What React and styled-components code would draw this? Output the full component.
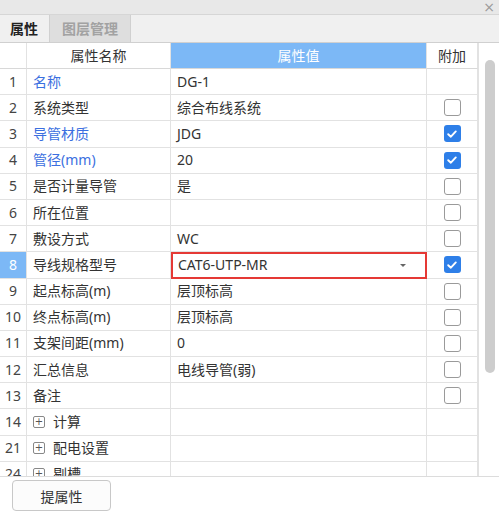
import styled, { createGlobalStyle } from 'styled-components';

const GlobalStyle = createGlobalStyle`
  html, body { margin:0; padding:0; background:#fff; }
  body { font-family:"Noto Sans","Noto Sans CJK SC",sans-serif; }
`;

const rows = [
  { no:'1', name:'名称', value:'DG-1', blue:true },
  { no:'2', name:'系统类型', value:'综合布线系统', check:false },
  { no:'3', name:'导管材质', value:'JDG', blue:true, check:true },
  { no:'4', name:'管径(mm)', value:'20', blue:true, check:true },
  { no:'5', name:'是否计量导管', value:'是', check:false },
  { no:'6', name:'所在位置', value:'', check:false },
  { no:'7', name:'敷设方式', value:'WC', check:false },
  { no:'8', name:'导线规格型号', value:'CAT6-UTP-MR', check:true, active:true },
  { no:'9', name:'起点标高(m)', value:'层顶标高', check:false },
  { no:'10', name:'终点标高(m)', value:'层顶标高', check:false },
  { no:'11', name:'支架间距(mm)', value:'0', check:false },
  { no:'12', name:'汇总信息', value:'电线导管(弱)', check:false },
  { no:'13', name:'备注', value:'', check:false },
  { no:'14', name:'计算', group:true },
  { no:'21', name:'配电设置', group:true },
  { no:'24', name:'剔槽', group:true },
];

const App = () => {
  return (
    <Panel>
      <GlobalStyle />
      <TitleBar>
        <Close>×</Close>
      </TitleBar>
      <TabBar>
        <Tab active>属性</Tab>
        <Tab>图层管理</Tab>
      </TabBar>
      <Body>
        <TableArea>
          <Grid>
            <Head />
            <Head>属性名称</Head>
            <Head value>属性值</Head>
            <Head>附加</Head>
            {rows.map((r) => (
              <Row key={r.no}>
                <IndexCell active={r.active}>{r.no}</IndexCell>
                <NameCell blue={r.blue}>
                  {r.group && <PlusBox>+</PlusBox>}
                  {r.name}
                </NameCell>
                <ValueCell active={r.active}>
                  {r.value}
                  {r.active && <Caret />}
                </ValueCell>
                <CheckCell>
                  {r.check !== undefined && (
                    <Box checked={r.check}>
                      {r.check && (
                        <svg width="12" height="12" viewBox="0 0 12 12">
                          <path d="M2.2 6.2 L4.9 8.7 L9.8 3.4" fill="none" stroke="#fff" strokeWidth="1.9" strokeLinecap="round" strokeLinejoin="round" />
                        </svg>
                      )}
                    </Box>
                  )}
                </CheckCell>
              </Row>
            ))}
          </Grid>
        </TableArea>
        <ScrollTrack>
          <Thumb />
        </ScrollTrack>
      </Body>
      <Footer>
        <Button>提属性</Button>
      </Footer>
    </Panel>
  );
};

const Panel = styled.div`
  width:499px;
  height:511px;
  display:flex;
  flex-direction:column;
  background:#fff;
  color:#333;
  font-size:14px;
  overflow:hidden;
`;

const TitleBar = styled.div`
  height:14px;
  background:#e8e8e8;
  border-bottom:1px solid #d6d6d6;
  display:flex;
  justify-content:flex-end;
  align-items:center;
  padding-right:4px;
`;

const Close = styled.span`
  color:#9a9a9a;
  font-family:"DejaVu Sans",sans-serif;
  font-size:14px;
  line-height:14px;
`;

const TabBar = styled.div`
  height:27px;
  background:#f0f0f0;
  border-bottom:1px solid #d0d0d0;
  display:flex;
  align-items:flex-end;
`;

const Tab = styled.div`
  height:27px;
  box-sizing:border-box;
  padding:0 ${(p) => (p.active ? '11px 0 10px' : '12px')};
  border-right:1px solid #d0d0d0;
  background:${(p) => (p.active ? '#f0f0f0' : '#dedede')};
  color:${(p) => (p.active ? '#222' : '#a2a2a2')};
  font-weight:bold;
  font-size:14px;
  line-height:27px;
  font-family:"Noto Sans CJK SC",sans-serif;
`;

const Body = styled.div`
  height:433px;
  display:flex;
  border-bottom:1px solid #dcdcdc;
`;

const TableArea = styled.div`
  width:478px;
  overflow:hidden;
`;

const Grid = styled.div`
  display:grid;
  grid-template-columns:27px 144px 256px 51px;
  grid-template-rows:26px;
  grid-auto-rows:26.2px;
`;

const Row = styled.div`
  display:contents;
`;

const Cell = styled.div`
  box-sizing:border-box;
  border-right:1px solid #e2e2e2;
  border-bottom:1px solid #e2e2e2;
  display:flex;
  align-items:center;
  white-space:nowrap;
  overflow:hidden;
  font-family:"Noto Sans","Noto Sans CJK SC",sans-serif;
  font-size:14px;
  line-height:18px;
`;

const Head = styled(Cell)`
  justify-content:center;
  background:${(p) => (p.value ? '#7cb8f6' : '#fff')};
  color:${(p) => (p.value ? '#fff' : '#333')};
  border-bottom:1px solid #d8d8d8;
`;

const IndexCell = styled(Cell)`
  justify-content:center;
  background:${(p) => (p.active ? '#7cb8f6' : '#fff')};
  color:${(p) => (p.active ? '#fff' : '#444')};
`;

const NameCell = styled(Cell)`
  padding-left:6px;
  color:${(p) => (p.blue ? '#3b6fe0' : '#333')};
`;

const PlusBox = styled.span`
  width:12px;
  height:12px;
  box-sizing:border-box;
  border:1px solid #888;
  border-radius:2px;
  display:inline-flex;
  align-items:center;
  justify-content:center;
  font-size:10px;
  line-height:10px;
  color:#555;
  margin:0 8px 0 0;
  font-family:"DejaVu Sans",sans-serif;
`;

const ValueCell = styled(Cell)`
  position:relative;
  padding-left:6px;
  color:#333;
  ${(p) => p.active && `
    border:2px solid #e53935;
    padding-left:5px;
  `}
`;

const Caret = styled.span`
  position:absolute;
  right:19px;
  top:10px;
  width:0;
  height:0;
  border-left:3px solid transparent;
  border-right:3px solid transparent;
  border-top:3px solid #666;
`;

const CheckCell = styled(Cell)`
  justify-content:center;
`;

const Box = styled.span`
  width:17px;
  height:17px;
  box-sizing:border-box;
  border-radius:3px;
  border:${(p) => (p.checked ? 'none' : '1px solid #9a9a9a')};
  background:${(p) => (p.checked ? '#2e7fe8' : '#fff')};
  display:flex;
  align-items:center;
  justify-content:center;
`;

const ScrollTrack = styled.div`
  width:21px;
  box-sizing:border-box;
  border-left:1px solid #e2e2e2;
  padding:17px 0 0 6px;
`;

const Thumb = styled.div`
  width:10px;
  height:313px;
  border-radius:5px;
  background:#cdcdcd;
`;

const Footer = styled.div`
  flex:1;
  padding:3px 0 0 12px;
`;

const Button = styled.button`
  width:99px;
  height:31px;
  border:1px solid #c8c8c8;
  border-radius:4px;
  background:#fcfcfc;
  color:#333;
  font-family:"Noto Sans CJK SC",sans-serif;
  font-size:14px;
  padding:0;
`;

export default App;
